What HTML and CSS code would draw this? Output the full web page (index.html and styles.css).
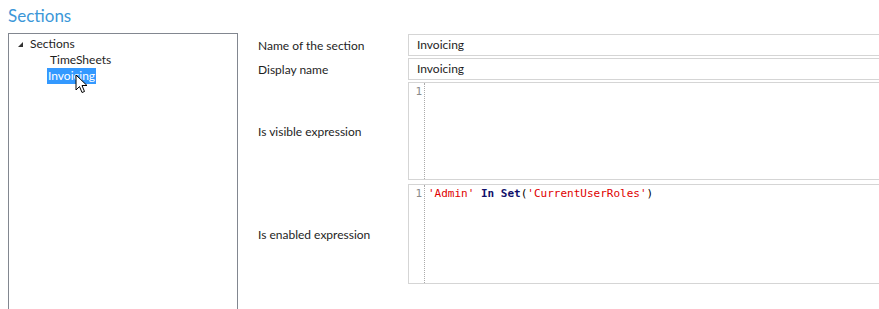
FILE: index.html
```html
<!DOCTYPE html>
<html lang="en">
<head>
    <meta charset="UTF-8">
    <title>Sections</title>
    <link rel="stylesheet" href="styles.css">
</head>
<body>

<div class="page-title">Sections</div>

<div class="main">
    <div class="tree">
        <div class="tree-node">
            <span class="expander"></span>
            <span class="node-label">Sections</span>
        </div>
        <div class="tree-children">
            <div class="tree-node"><span class="node-label">TimeSheets</span></div>
            <div class="tree-node">
                <span class="node-label selected">Invoicing</span>
                <svg class="cursor" width="13" height="20" viewBox="0 0 13 20">
                    <path d="M1 1 L1 16 L4.5 12.5 L7 18.5 L9.5 17.5 L7 11.5 L12 11.5 Z" fill="#fff" stroke="#000" stroke-width="1" stroke-linejoin="miter"/>
                </svg>
            </div>
        </div>
    </div>

    <div class="form">
        <div class="form-row">
            <div class="label">Name of the section</div>
            <div class="field"><div class="text-input">Invoicing</div></div>
        </div>
        <div class="form-row">
            <div class="label">Display name</div>
            <div class="field"><div class="text-input">Invoicing</div></div>
        </div>
        <div class="form-row">
            <div class="label">Is visible expression</div>
            <div class="field">
                <div class="editor">
                    <div class="gutter">1</div>
                    <div class="code"></div>
                </div>
            </div>
        </div>
        <div class="form-row">
            <div class="label">Is enabled expression</div>
            <div class="field">
                <div class="editor">
                    <div class="gutter">1</div>
                    <div class="code"><span class="str">'Admin'</span> <span class="kw">In</span> <span class="kw">Set</span>(<span class="str">'CurrentUserRoles'</span>)</div>
                </div>
            </div>
        </div>
    </div>
</div>

</body>
</html>
```

FILE: styles.css
```css
body {
    margin: 0;
    font-family: Lato, sans-serif;
    font-size: 12px;
    color: #1e1e1e;
    background: #fff;
    overflow: hidden;
}
.page-title {
    font-size: 17px;
    color: #3c97d8;
    padding: 5px 0 0 8px;
    height: 33px;
    box-sizing: border-box;
}
.main {
    display: flex;
    align-items: flex-start;
}
.tree {
    margin-left: 8px;
    width: 230px;
    height: 290px;
    border: 1px solid #828790;
    border-bottom: none;
    box-sizing: border-box;
    padding-top: 2px;
}
.tree-node {
    display: flex;
    align-items: center;
    height: 16px;
    position: relative;
}
.expander {
    width: 0;
    height: 0;
    border-left: 5px solid transparent;
    border-bottom: 5px solid #333;
    margin: 0 6px 0 9px;
}
.tree-children {
    padding-left: 40px;
}
.node-label {
    padding: 0 1px;
    line-height: 16px;
}
.node-label.selected {
    background: #3399ff;
    color: #fff;
    margin-left: -2px;
}
.cursor {
    position: absolute;
    left: 26px;
    top: 6px;
}
.form {
    flex: 1;
    margin: 1px 0 0 20px;
    display: flex;
    flex-direction: column;
    gap: 2px;
}
.form-row {
    display: flex;
    align-items: center;
}
.label {
    width: 150px;
    flex-shrink: 0;
}
.field {
    flex: 1;
}
.text-input {
    height: 22px;
    border: 1px solid #d5d5d5;
    border-right: none;
    box-sizing: border-box;
    padding-left: 8px;
    line-height: 20px;
}
.editor {
    display: flex;
    height: 98px;
    border: 1px solid #d5d5d5;
    border-right: none;
    box-sizing: border-box;
    font-family: "DejaVu Sans Mono", monospace;
    font-size: 11px;
    line-height: 15px;
}
.form-row:last-child {
    margin-top: 2px;
}
.form-row:last-child .editor {
    height: 100px;
}
.gutter {
    width: 16px;
    color: #8a8a8a;
    text-align: right;
    border-right: 1px dotted #aaa;
    padding: 1px 2px 0 0;
    box-sizing: border-box;
}
.code {
    padding: 1px 0 0 3px;
    color: #000;
}
.str {
    color: #e00000;
}
.kw {
    color: #10106a;
    font-weight: bold;
}
```
